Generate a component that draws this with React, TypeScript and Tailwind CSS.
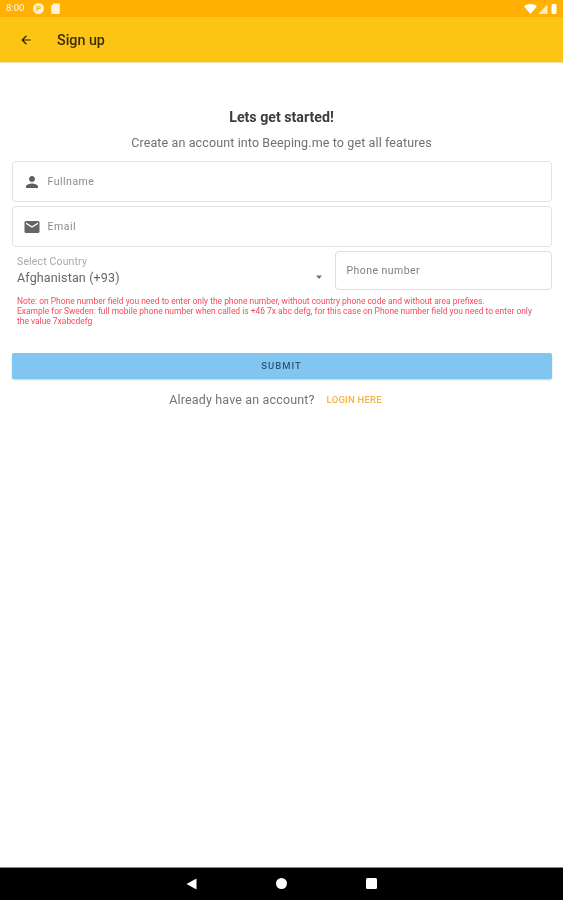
export default function App() {
  return (
    <div className="w-[563px] h-[900px] flex flex-col bg-white overflow-hidden font-['Roboto',sans-serif] blur-[0.4px]">
      {/* Status bar */}
      <div className="h-[17px] bg-[#ffb000] flex items-center px-[6px] text-white">
        <span className="text-[9.5px] w-[20px] opacity-90">8:00</span>
        <span className="ml-[7px] w-[11px] h-[11px] rounded-full bg-[#fff3d6] flex items-center justify-center text-[#ffb000] text-[8px] font-bold leading-none">P</span>
        <svg className="ml-[7px]" width="9" height="11" viewBox="0 0 9 11">
          <path d="M2.5 0.5H8a.8.8 0 0 1 .8.8v8.9a.8.8 0 0 1-.8.8H1a.8.8 0 0 1-.8-.8V3z" fill="#fff3d6" />
        </svg>
        <div className="ml-auto flex items-center gap-[1px]">
          <svg width="13" height="10" viewBox="0 0 13 10"><path d="M0 2.2C3.6-.7 9.4-.7 13 2.2L6.5 10z" fill="#fff" /></svg>
          <svg width="10" height="10" viewBox="0 0 10 10"><path d="M9.5 0.5V10H0z" fill="#fff" opacity="0.75" /></svg>
          <svg className="ml-[2px]" width="6" height="10" viewBox="0 0 6 10"><path d="M1.5 0h3a1 1 0 0 1 1 1v8.2a.8.8 0 0 1-.8.8H1.3a.8.8 0 0 1-.8-.8V1a1 1 0 0 1 1-1z" fill="#fff" /></svg>
        </div>
      </div>

      {/* App bar */}
      <div className="h-[46px] bg-[#fcc516] flex items-center border-b border-[#f3e3b0]">
        <svg className="ml-[19px]" width="14" height="14" viewBox="0 0 24 24">
          <path d="M20 11H7.83l5.59-5.59L12 4l-8 8 8 8 1.41-1.41L7.83 13H20z" fill="#2a2000" />
        </svg>
        <span className="ml-[24px] pt-[3px] text-[14.3px] text-[#3a2e05] font-medium">Sign up</span>
      </div>

      {/* Content */}
      <div className="flex-1 flex flex-col px-[11.5px]">
        <div className="mt-[45px] text-center text-[14.2px] font-bold text-[#3c3c3c] leading-[18px]">Lets get started!</div>
        <div className="mt-[9px] text-center text-[12.5px] text-[#707070] leading-[16px] tracking-[0.12px]">Create an account into Beeping.me to get all features</div>

        <div className="mt-[10px] h-[41px] border-[1.5px] border-[#e2e2e2] rounded-[4px] flex items-center">
          <svg className="ml-[10px]" width="18" height="18" viewBox="0 0 24 24">
            <path d="M12 12c2.21 0 4-1.79 4-4s-1.79-4-4-4-4 1.79-4 4 1.79 4 4 4zm0 2c-2.67 0-8 1.34-8 4v2h16v-2c0-2.66-5.33-4-8-4z" fill="#5f5f5f" />
          </svg>
          <span className="ml-[7px] text-[10.5px] text-[#8a8a8a] tracking-[0.5px]">Fullname</span>
        </div>
        <div className="mt-[4px] h-[41px] border-[1.5px] border-[#e2e2e2] rounded-[4px] flex items-center">
          <svg className="ml-[10px]" width="18" height="18" viewBox="0 0 24 24">
            <path d="M20 4H4c-1.1 0-2 .9-2 2v12c0 1.1.9 2 2 2h16c1.1 0 2-.9 2-2V6c0-1.1-.9-2-2-2zm0 4l-8 5-8-5V6l8 5 8-5v2z" fill="#666666" />
          </svg>
          <span className="ml-[7px] text-[10.5px] text-[#8a8a8a] tracking-[0.5px]">Email</span>
        </div>

        <div className="mt-[4px] flex items-start">
          <div className="w-[317.5px] pl-[5.5px] h-[41px] relative">
            <div className="pt-[4px] text-[10.5px] leading-[13px] text-[#a8a8a8] tracking-[0.15px]">Select Country</div>
            <div className="mt-[2px] text-[12.5px] leading-[16px] text-[#666666] tracking-[0.15px]">Afghanistan (+93)</div>
            <svg className="absolute left-[303px] top-[24px]" width="8" height="5" viewBox="0 0 8 5"><path d="M1 .5h6L4 4z" fill="#707070" /></svg>
          </div>
          <div className="ml-[6px] flex-1 h-[39px] border-[1.5px] border-[#dedede] rounded-[4px] flex items-center pl-[10.5px]">
            <span className="text-[10.5px] text-[#808080] tracking-[0.45px]">Phone number</span>
          </div>
        </div>

        <div className="mt-[4px] pl-[5.5px] pr-[12px] text-[8.45px] leading-[10px] text-[#f44a5a]">
          <div>Note: on Phone number field you need to enter only the phone number, without country phone code and without area prefixes.</div>
          <div>Example for Sweden: full mobile phone number when called is +46 7x abc defg, for this case on Phone number field you need to enter only the value 7xabcdefg</div>
        </div>

        <div className="mt-[27px] h-[26px] rounded-[2px] bg-[#81c6f1] shadow-[0_1px_2px_rgba(0,0,0,0.2)] flex items-center justify-center text-[9.5px] font-medium tracking-[1px] text-[#2f5673]">SUBMIT</div>

        <div className="mt-[13px] flex justify-center items-center pr-[12px] h-[16px]">
          <span className="text-[12.5px] text-[#747474] tracking-[0.15px]">Already have an account?</span>
          <span className="ml-[12px] text-[9.5px] font-medium text-[#f9b13c] tracking-[0.2px]">LOGIN HERE</span>
        </div>
      </div>

      {/* Nav bar */}
      <div className="h-[33px] bg-black border-t border-[#8a8a8a] flex items-center relative">
        <svg className="absolute left-[186px] top-[10px]" width="11" height="12" viewBox="0 0 11 12"><path d="M10.5 0.5V11.5L0.5 6z" fill="#fff" /></svg>
        <span className="absolute left-[276px] top-[10px] w-[11px] h-[11px] rounded-full bg-white" />
        <span className="absolute left-[366px] top-[10px] w-[11px] h-[11px] rounded-[1.5px] bg-white" />
      </div>
    </div>
  );
}
